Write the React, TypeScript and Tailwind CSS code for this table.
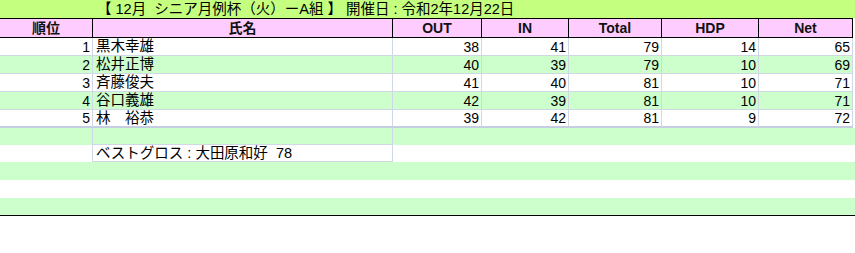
import React from "react";

// 12月 シニア月例杯 A組 results sheet, Excel-style grid
const rows = [
  { rank: 1, name: "黒木幸雄", out: 38, inn: 41, total: 79, hdp: 14, net: 65 },
  { rank: 2, name: "松井正博", out: 40, inn: 39, total: 79, hdp: 10, net: 69 },
  { rank: 3, name: "斉藤俊夫", out: 41, inn: 40, total: 81, hdp: 10, net: 71 },
  { rank: 4, name: "谷口義雄", out: 42, inn: 39, total: 81, hdp: 10, net: 71 },
  { rank: 5, name: "林\u3000裕恭", out: 39, inn: 42, total: 81, hdp: 9, net: 72 },
];

const cols = "grid grid-cols-[93px_300px_89px_87px_93px_97px_94px] w-[853px]";
const headers = ["順位", "氏名", "OUT", "IN", "Total", "HDP", "Net"];

export default function App() {
  return (
    <div
      className="w-[855px] h-[253px] bg-white text-black text-[14px] leading-none"
      style={{ fontFamily: '"Liberation Sans", "Noto Sans CJK JP", sans-serif' }}
    >
      <div className="h-[18px] bg-[#c4ff80] flex items-center pl-[97px] whitespace-pre text-[14.5px]">
        【 12月  シニア月例杯（火）ーA組 】 開催日 : 令和2年12月22日
      </div>

      <div className={`${cols} bg-[#ffccff] border-y border-black`}>
        {headers.map((h) => (
          <div
            key={h}
            className="h-[18px] flex items-center justify-center font-bold text-[#111] border-r border-black"
          >
            {h}
          </div>
        ))}
      </div>

      {rows.map((r, idx) => {
        const bg = idx % 2 === 1 ? "bg-[#ccffcc]" : "bg-white";
        const last = idx === rows.length - 1;
        const b = last ? "border-b-2 border-b-[#c5cde0]" : "border-b border-b-[#d0d7e5]";
        const nums = [r.out, r.inn, r.total, r.hdp, r.net];
        return (
          <div key={r.rank} className={`${cols} ${bg}`}>
            <div className={`h-[18px] flex items-center justify-end pr-[2px] border-r border-r-[#d0d7e5] ${b}`}>
              {r.rank}
            </div>
            <div className={`h-[18px] flex items-center pl-[3px] text-[14.5px] border-r border-r-[#d0d7e5] ${b}`}>
              {r.name}
            </div>
            {nums.map((n, i) => (
              <div
                key={i}
                className={`h-[18px] flex items-center justify-end pr-[2px] border-r border-r-[#d0d7e5] ${b}`}
              >
                {n}
              </div>
            ))}
          </div>
        );
      })}

      {/* filler rows below the results */}
      <div className="flex h-[17px] bg-[#ccffcc] w-[855px]">
        <div className="w-[93px] border-r border-r-[#d0d7e5]" />
        <div className="w-[300px] border-r border-r-[#d0d7e5] border-b border-b-[#d0d7e5]" />
      </div>
      <div className="flex h-[17px] bg-white w-[855px]">
        <div className="w-[93px] border-r border-r-[#d0d7e5]" />
        <div className="w-[300px] border-r border-r-[#d0d7e5] border-b border-b-[#d0d7e5] flex items-center pl-[3px] whitespace-pre text-[14.5px]">
          ベストグロス : 大田原和好  78
        </div>
      </div>
      <div className="h-[18px] bg-[#ccffcc]" />
      <div className="h-[18px] bg-white" />
      <div className="h-[18px] bg-[#ccffcc] border-b border-black" />
    </div>
  );
}
